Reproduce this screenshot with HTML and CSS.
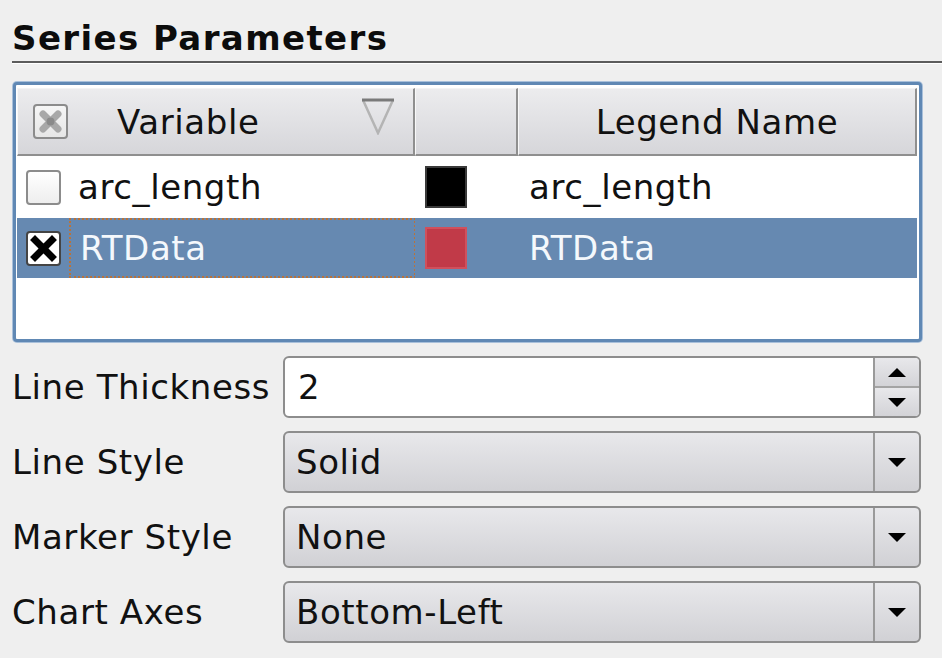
FILE: index.html
```html
<!DOCTYPE html>
<html>
<head>
<meta charset="utf-8">
<link rel="stylesheet" href="styles.css">
</head>
<body>
<div class="panel">
  <div class="title">Series Parameters</div>
  <div class="sep"></div>
  <div class="frame">
    <div class="grid">
      <div class="hcell hc1">
        <span class="cb cb-head"><svg width="31" height="31" viewBox="0 0 31 31"><path d="M8 8 L23 23 M23 8 L8 23" stroke="#a8a8a8" stroke-width="7" stroke-linecap="round"/><circle cx="15.5" cy="15.5" r="4" fill="#8a8a8a"/></svg></span>
        <span class="htext">Variable</span>
        <svg class="sort" width="34" height="37" viewBox="0 0 34 37"><path d="M2 2 L17 35 L32 2" fill="none" stroke="#b4b4b4" stroke-width="2.5"/><path d="M1 2 L33 2" stroke="#7a7a7a" stroke-width="3"/></svg>
      </div>
      <div class="hcell hc2"></div>
      <div class="hcell hc3"><span class="htext">Legend Name</span></div>

      <div class="cell c1"><span class="cb"></span><span class="name">arc_length</span></div>
      <div class="cell c2"><span class="swatch black"></span></div>
      <div class="cell c3">arc_length</div>

      <div class="cell c1 sel"><span class="cb cb-on"><svg width="31" height="31" viewBox="0 0 31 31"><path d="M7 7 L24 24 M24 7 L7 24" stroke="#000" stroke-width="7" stroke-linecap="square"/></svg></span><span class="name focus">RTData</span></div>
      <div class="cell c2 sel"><span class="swatch red"></span></div>
      <div class="cell c3 sel">RTData</div>
    </div>
    <div class="empty"></div>
  </div>

  <div class="form">
    <div class="label">Line Thickness</div>
    <div class="spin">
      <div class="spin-text">2</div>
      <div class="spin-btns">
        <div class="sbtn up"><svg width="18" height="9" viewBox="0 0 18 9"><path d="M0 9 L9 0 L18 9 Z" fill="#000"/></svg></div>
        <div class="sbtn down"><svg width="18" height="9" viewBox="0 0 18 9"><path d="M0 0 L9 9 L18 0 Z" fill="#000"/></svg></div>
      </div>
    </div>

    <div class="label">Line Style</div>
    <div class="combo"><div class="combo-text">Solid</div><div class="drop"><svg width="18" height="9" viewBox="0 0 18 9"><path d="M0 0 L9 9 L18 0 Z" fill="#000"/></svg></div></div>

    <div class="label">Marker Style</div>
    <div class="combo"><div class="combo-text">None</div><div class="drop"><svg width="18" height="9" viewBox="0 0 18 9"><path d="M0 0 L9 9 L18 0 Z" fill="#000"/></svg></div></div>

    <div class="label">Chart Axes</div>
    <div class="combo"><div class="combo-text">Bottom-Left</div><div class="drop"><svg width="18" height="9" viewBox="0 0 18 9"><path d="M0 0 L9 9 L18 0 Z" fill="#000"/></svg></div></div>
  </div>
</div>
</body>
</html>
```
FILE: styles.css
```css
html, body {
  margin: 0;
  padding: 0;
  background: #efefef;
}
body {
  font-family: "DejaVu Sans", "Liberation Sans", sans-serif;
  font-size: 34px;
  letter-spacing: 0.6px;
  color: #111;
  width: 942px;
  height: 658px;
  overflow: hidden;
}
.panel {
  padding-top: 18px;
  padding-left: 12px;
}
.title {
  font-weight: bold;
  letter-spacing: 1.4px;
  line-height: 40px;
  height: 40px;
  color: #0c0c0c;
}
.sep {
  margin-top: 3px;
  height: 2px;
  background: #5c5c5c;
  border-bottom: 1px solid #ffffff;
}
.frame {
  margin-top: 18px;
  margin-left: 1px;
  width: 900px;
  border: 3px solid #6088b4;
  border-radius: 4px;
  box-shadow: 0 0 0 1px #a9c0da;
  background: #ffffff;
  padding: 3px 2px 0 1px;
  box-sizing: content-box;
}
.grid {
  display: grid;
  grid-template-columns: 398px 103px 1fr;
  grid-template-rows: 68px 62px 60px;
}
.hcell {
  display: flex;
  align-items: center;
  background: linear-gradient(#ececee, #d6d6da);
  border-right: 2px solid #8f8f8f;
  border-left: 1px solid #f8f8f8;
  border-bottom: 2px solid #8f8f8f;
  border-top: 1px solid #f4f4f4;
  box-sizing: border-box;
  color: #111;
}
.hc1 { padding-left: 15px; position: relative; }
.hc3 { justify-content: center; }
.htext { line-height: 40px; }
.hc1 .htext { margin-left: 49px; }
.sort {
  position: absolute;
  right: 18px;
  top: 9px;
}
.cb {
  width: 35px;
  height: 35px;
  box-sizing: border-box;
  border: 2px solid #8c8c8c;
  border-radius: 4px;
  background: linear-gradient(#ffffff, #eeeeee);
  display: flex;
  align-items: center;
  justify-content: center;
  flex: none;
}
.cb-head { background: linear-gradient(#f6f6f6, #e6e6e6); }
.cb-on { background: #ffffff; border-color: #444; }
.cell {
  display: flex;
  align-items: center;
  box-sizing: border-box;
  background: #ffffff;
}
.c1 { padding-left: 9px; }
.c1 .name { margin-left: 8px; padding-left: 9px; height: 100%; display: flex; align-items: center; flex: 1; box-sizing: border-box; }
.c2 { padding-left: 10px; }
.c3 { padding-left: 11px; }
.sel { background: #6689b1; color: #f4f8fc; }
.focus {
  border: 2px dotted #b9733a;
  margin-right: -1px;
}
.swatch {
  width: 42px;
  height: 42px;
  box-sizing: border-box;
}
.black { background: #000; border: 2px solid #3a3a3a; }
.red { background: #c13a48; border: 2px solid #d0505c; }
.empty { height: 61px; }

.form {
  margin-top: 14px;
  display: grid;
  grid-template-columns: 271px 638px;
  grid-auto-rows: 62px;
  row-gap: 13px;
}
.label {
  display: flex;
  align-items: center;
  color: #111;
}
.spin, .combo {
  display: flex;
  border: 2px solid #8d8d8d;
  border-radius: 6px;
  box-sizing: border-box;
  overflow: hidden;
}
.spin { background: #ffffff; }
.combo { background: linear-gradient(#e8e8eb, #d1d1d5); }
.spin-text, .combo-text {
  flex: 1;
  display: flex;
  align-items: center;
  padding-left: 11px;
}
.spin-text { padding-left: 13px; }
.spin-btns {
  width: 44px;
  display: flex;
  flex-direction: column;
  border-left: 2px solid #9a9a9a;
}
.sbtn {
  flex: 1;
  display: flex;
  align-items: center;
  justify-content: center;
  background: linear-gradient(#e8e8eb, #d3d3d7);
}
.sbtn.up { border-bottom: 2px solid #a4a4a4; }
.drop {
  width: 44px;
  display: flex;
  align-items: center;
  justify-content: center;
  border-left: 2px solid #9a9a9a;
}
```
